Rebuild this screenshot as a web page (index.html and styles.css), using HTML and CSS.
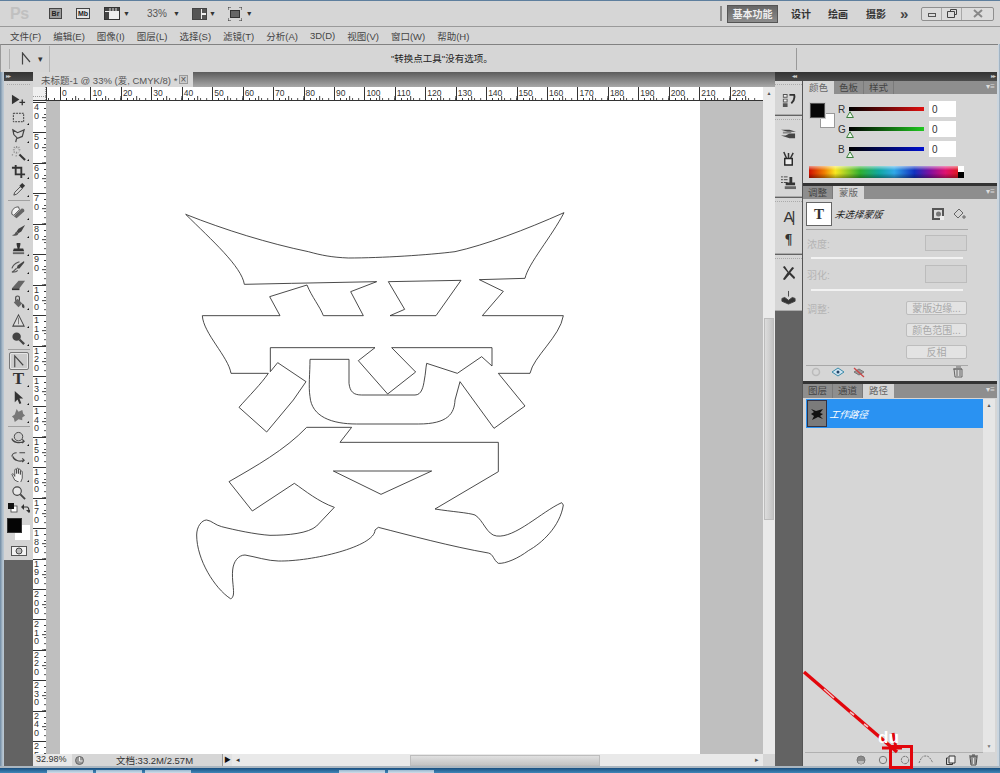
FILE: index.html
```html
<!DOCTYPE html>
<html lang="zh">
<head>
<meta charset="utf-8">
<title>Photoshop</title>
<link rel="stylesheet" href="styles.css">
</head>
<body>
<div class="app">
  <header class="appbar">
    <span class="ps-logo">Ps</span>
    <span class="br-btn">Br</span>
    <span class="mb-btn">Mb</span>
    <svg class="ic viewmode" width="16" height="13" viewBox="0 0 16 13"><rect x=".5" y=".5" width="15" height="12" fill="#eee" stroke="#333"/><path d="M1 1h14v3H1zM1 5h4v7H1z" fill="#444"/><path d="M6 1v3M9 1v3M12 1v3" stroke="#ddd"/></svg>
    <span class="caret c-view">▼</span>
    <span class="pct">33%</span>
    <span class="caret c-pct">▼</span>
    <svg class="ic arrange" width="15" height="12" viewBox="0 0 15 12"><rect x=".5" y=".5" width="14" height="11" fill="#eee" stroke="#444"/><path d="M1 1h8v10H1zM10 1h4v4h-4zM10 7h4v4h-4z" fill="#555"/></svg>
    <span class="caret c-arr">▼</span>
    <svg class="ic screen" width="14" height="14" viewBox="0 0 14 14"><rect x="2.500" y="3.500" width="9" height="7" fill="#666" stroke="#333"/><path d="M0 3V0h3M11 0h3v3M0 11v3h3M14 11v3h-3" fill="none" stroke="#333"/></svg>
    <span class="caret c-scr">▼</span>
    <span class="spacer"></span>
    <span class="grip-v"></span>
    <span class="ws ws-active">基本功能</span>
    <span class="ws ws-design">设计</span>
    <span class="ws ws-paint">绘画</span>
    <span class="ws ws-photo">摄影</span>
    <span class="more">»</span>
    <div class="winbtns">
      <span class="wb wb-min"><i class="min-glyph"></i></span>
      <span class="wb wb-max"><svg width="10" height="9" viewBox="0 0 10 9"><path d="M3.500 2.500v-2h6v5h-2M.5 2.500h7v6h-7z" fill="none" stroke="#444"/></svg></span>
      <span class="wb wb-close"><svg width="10" height="9" viewBox="0 0 10 9"><path d="M1 1l8 7M9 1L1 8" stroke="#888" stroke-width="2"/></svg></span>
    </div>
  </header>

  <nav class="menubar">
    <span>文件(F)</span><span>编辑(E)</span><span>图像(I)</span><span>图层(L)</span><span>选择(S)</span><span>滤镜(T)</span><span>分析(A)</span><span>3D(D)</span><span>视图(V)</span><span>窗口(W)</span><span>帮助(H)</span>
  </nav>

  <div class="options">
    <span class="opt-grip"></span>
    <svg class="opt-tool" width="10" height="13" viewBox="0 0 10 13"><path d="M1.500 12.500V1L9 10" fill="none" stroke="#444" stroke-width="1.200"/></svg>
    <span class="opt-caret">▾</span>
    <span class="opt-sep"></span>
    <span class="opt-text">"转换点工具"没有选项。</span>
    <span class="opt-sep2"></span>
  </div>

  <main class="work">
    <aside class="toolbar">
      <div class="tool-head"><span class="dbl">▸▸</span></div>
      <div class="tools">
        <div class="tool-grip"></div>
        <div class="tool"><svg viewBox="0 0 16 16"><path d="M1 3l8 5-8 5z" fill="#333"/><path d="M12 8v6M9 11h6" stroke="#333" stroke-width="1.400"/></svg></div>
        <div class="tool fly"><svg viewBox="0 0 16 16"><rect x="2.500" y="3.500" width="11" height="9" fill="none" stroke="#333" stroke-dasharray="2 1"/></svg></div>
        <div class="tool fly"><svg viewBox="0 0 16 16"><path d="M2 2l5 3 7-3-2 7-5 2-4-4zM6 11l-1 4" fill="none" stroke="#444" stroke-width="1.300"/></svg></div>
        <div class="tool fly"><svg viewBox="0 0 16 16"><path d="M9 9l6 6" stroke="#333" stroke-width="2.200"/><path d="M2 4h2M8 4h2M6 0v2M6 6v2M3 1l1 1M9 1L8 2M3 7l1-1M1 10l1-1M5 11l1-1" stroke="#8a8a8a" stroke-width="1.200"/><circle cx="6" cy="5" r="3" fill="none" stroke="#aaa" stroke-dasharray="1 1"/></svg></div>
        <div class="tool fly"><svg viewBox="0 0 16 16"><path d="M5 1v10h10M1 4h10v11" fill="none" stroke="#333" stroke-width="2"/></svg></div>
        <div class="tool fly"><svg viewBox="0 0 16 16"><path d="M3 14l1-3 6-6 2 2-6 6z" fill="#ddd" stroke="#444"/><path d="M9 4l3-3 3 3-3 3z" fill="#333"/></svg></div>
        <div class="tool-sep"></div>
        <div class="tool fly"><svg viewBox="0 0 16 16"><path d="M3 12L11 4c2-1 4 1 3 3l-8 7z" fill="#666"/><path d="M1 10C0 6 3 2 8 2l1 3-6 6z" fill="#f2f2f2" stroke="#444" stroke-width=".9"/></svg></div>
        <div class="tool fly"><svg viewBox="0 0 16 16"><path d="M15 2L8 6l-2 3 2 2 3-2z" fill="#444"/><path d="M6 9c-2 1-1 3-5 4 3 1 6 1 7-2z" fill="#555"/></svg></div>
        <div class="tool fly"><svg viewBox="0 0 16 16"><path d="M6 2h4v2L9 8h4l1 3H2l1-3h4L6 4z" fill="#333"/><path d="M2 12h12v2H2z" fill="#666"/></svg></div>
        <div class="tool fly"><svg viewBox="0 0 16 16"><path d="M14 2L7 7l-1 3 3 0 5-6z" fill="#444"/><path d="M1 10c2-6 6-6 8-7M6 10c-2 1-2 3-5 4 3 0 5 0 6-2" fill="none" stroke="#555" stroke-width="1.200"/></svg></div>
        <div class="tool fly"><svg viewBox="0 0 16 16"><path d="M1 12l7-8h7l-6 8z" fill="#666"/><path d="M1 12h8v2H1z" fill="#333"/></svg></div>
        <div class="tool fly"><svg viewBox="0 0 16 16"><path d="M3 8l4-4 5 5-4 4z" fill="#666"/><path d="M5 6V3a2 2 0 014 0v3" fill="none" stroke="#444" stroke-width="1.200"/><path d="M12 9c2 1 3 3 2 5-2 0-3-2-2-5z" fill="#444"/></svg></div>
        <div class="tool fly"><svg viewBox="0 0 16 16"><path d="M8 2l6 12H2z" fill="#ddd" stroke="#444" stroke-width="1.100"/><path d="M8 5v7" stroke="#777"/></svg></div>
        <div class="tool fly"><svg viewBox="0 0 16 16"><circle cx="6" cy="6" r="4.500" fill="#444"/><path d="M9 9l5 5" stroke="#444" stroke-width="2.400"/></svg></div>
        <div class="tool-sep"></div>
        <div class="tool tool-active"><svg viewBox="0 0 16 16"><path d="M4 14V2l9 10" fill="none" stroke="#444" stroke-width="1.200"/></svg></div>
        <div class="tool fly"><span class="t-glyph">T</span></div>
        <div class="tool fly"><svg viewBox="0 0 16 16"><path d="M4 1v12l3-3 2 5 2-1-2-5h4z" fill="#333"/></svg></div>
        <div class="tool fly"><svg viewBox="0 0 16 16"><path d="M6 1l2 3 4-2 1 4 2 2-3 2 0 3-4-1-4 3-1-4-2-2 3-2z" fill="#777"/></svg></div>
        <div class="tool-sep"></div>
        <div class="tool fly"><svg viewBox="0 0 16 16"><circle cx="8" cy="6" r="4.500" fill="#ccc" stroke="#444"/><path d="M1 8c1 4 8 6 13 3M12 9l2 2-2 2" fill="none" stroke="#444" stroke-width="1.300"/></svg></div>
        <div class="tool fly"><svg viewBox="0 0 16 16"><path d="M9 4h6M1 8c0-2 2-4 5-4M2 8c1 4 7 6 12 4M12 10l2 2-2 2" fill="none" stroke="#444" stroke-width="1.300"/></svg></div>
        <div class="tool fly"><svg viewBox="0 0 16 16"><path d="M4 14L1 8c0-1 1-1 2 0l1 2V3c0-1 2-1 2 0v4-5c0-1 2-1 2 0v5-4c0-1 2-1 2 0v5-3c0-1 2-1 2 0v7l-2 5z" fill="#eee" stroke="#444" stroke-width=".9"/></svg></div>
        <div class="tool"><svg viewBox="0 0 16 16"><circle cx="6.500" cy="6.500" r="4.500" fill="#e8e8e8" stroke="#444" stroke-width="1.200"/><path d="M10 10l5 5" stroke="#444" stroke-width="2"/></svg></div>
        <div class="mini-colors">
          <svg width="10" height="10" viewBox="0 0 10 10"><rect x="3" y="3" width="6" height="6" fill="#fff" stroke="#444" stroke-width=".8"/><rect width="6" height="6" fill="#111"/></svg>
          <svg width="9" height="9" viewBox="0 0 9 9"><path d="M1 3h5q2 0 2 5" fill="none" stroke="#333" stroke-width="1.200"/><path d="M3 0v6L0 3zM5 6h6L8 9z" fill="#333"/></svg>
        </div>
        <div class="swatch-pair"><span class="sw-bg"></span><span class="sw-fg"></span></div>
        <div class="qmask"><svg width="16" height="10" viewBox="0 0 16 10"><rect x=".5" y=".5" width="15" height="9" fill="#f2f2f2" stroke="#555"/><circle cx="8" cy="5" r="3" fill="#bbb" stroke="#444"/></svg></div>
      </div>
    </aside>

    <section class="docarea">
      <div class="tabbar">
        <div class="doctab"><span>未标题-1 @ 33% (爱, CMYK/8) *</span><span class="tabclose">×</span></div>
      </div>
      <div class="docgrid">
        <div class="hruler">
          <div class="corner"></div>
          <div class="hlead"></div>
          <span class="ht">0</span><span class="ht">10</span><span class="ht">20</span><span class="ht">30</span><span class="ht">40</span><span class="ht">50</span><span class="ht">60</span><span class="ht">70</span><span class="ht">80</span><span class="ht">90</span><span class="ht">100</span><span class="ht">110</span><span class="ht">120</span><span class="ht">130</span><span class="ht">140</span><span class="ht">150</span><span class="ht">160</span><span class="ht">170</span><span class="ht">180</span><span class="ht">190</span><span class="ht">200</span><span class="ht">210</span><span class="ht">220</span>
        </div>
        <div class="vscroll">
          <span class="sc-up">▲</span>
          <span class="sc-thumb"></span>
          <span class="sc-down"></span>
        </div>
        <div class="stage">
          <div class="vruler">
            <span class="vt"><b>40</b></span><span class="vt"><b>50</b></span><span class="vt"><b>60</b></span><span class="vt"><b>70</b></span><span class="vt"><b>80</b></span><span class="vt"><b>90</b></span><span class="vt"><b>100</b></span><span class="vt"><b>110</b></span><span class="vt"><b>120</b></span><span class="vt"><b>130</b></span><span class="vt"><b>140</b></span><span class="vt"><b>150</b></span><span class="vt"><b>160</b></span><span class="vt"><b>170</b></span><span class="vt"><b>180</b></span><span class="vt"><b>190</b></span><span class="vt"><b>200</b></span><span class="vt"><b>210</b></span><span class="vt"><b>220</b></span><span class="vt"><b>230</b></span><span class="vt"><b>240</b></span><span class="vt"><b>250</b></span>
          </div>
          <div class="paste-l"></div>
          <div class="canvas">
            <svg class="glyph" width="640" height="653" viewBox="-345 -297 1920 1959">
              <path d="M32 43C150 90 280 130 400 155C440 166 470 172 520 174C620 174 760 165 840 155C930 135 1050 90 1167 38C1130 110 1060 190 1050 235L913 239L985 274L922 347L1165 347C1155 410 1075 470 1065 520L970 520L1050 618L957 685L895 600L855 545L840 600C838 640 820 672 730 672L545 672C470 672 410 650 405 590C400 560 405 520 405 478L522 478L522 550C525 575 535 585 560 585L720 585C740 585 745 560 748 540C752 520 752 505 755 490L847 520L920 470L951 498L951 443L650 443L722 516L638 582L550 482L600 443L286 443L286 515L308 488L393 545L355 600L275 696L192 622C220 590 260 550 280 520L168 520C160 470 85 400 82 347L315 347L284 290L396 255C410 290 435 320 445 347L565 347L527 275L605 245L350 250L208 253C200 200 110 120 32 43Z"/>
              <path d="M640 245L858 241L783 347L645 347L689 328Z"/>
              <path d="M395 682L530 682L495 727L970 727L970 815L780 927C830 935 880 938 900 945C925 960 935 1005 965 1008C1020 1015 1100 935 1160 908L1165 915C1155 980 1100 1030 1060 1052C1030 1075 990 1092 970 1090C955 1080 955 1062 940 1059C830 1040 700 1005 610 982L600 990C600 1040 410 1085 310 1083C280 1083 240 1070 210 1065C190 1065 175 1085 173 1110C170 1140 178 1170 175 1185C172 1195 168 1198 165 1195C120 1165 65 1080 65 1005C65 980 80 960 95 960C110 962 120 975 140 980C180 990 240 1003 285 1006C340 1006 400 1000 425 978L478 922C430 905 390 872 358 850L232 933L162 845C240 800 330 750 395 682Z"/>
              <path d="M475 813L770 813L618 883Z"/>
            </svg>
          </div>
          <div class="paste-r"></div>
        </div>
      </div>
      <div class="statusbar">
        <span class="st-zoom">32.98%</span>
        <span class="st-icon"><svg width="11" height="11" viewBox="0 0 11 11"><circle cx="5.500" cy="5.500" r="4" fill="#999" stroke="#666"/><path d="M5.500 2v4h3" fill="none" stroke="#eee"/></svg></span>
        <span class="st-doc">文档:33.2M/2.57M</span>
        <span class="st-arrow">▶</span>
        <span class="hscroll"><i class="hs-l">◂</i><i class="hs-thumb"></i><i class="hs-r">▸</i></span>
        <span class="st-end"></span>
      </div>
    </section>

    <div class="rightcol">
      <div class="dockhead"><span class="dbl">◂◂</span><span class="dbl">▸▸</span></div>
      <div class="dockbody">
        <div class="dock">
          <div class="dgroup g1"><svg viewBox="0 0 16 16"><path d="M2 1h5v4H2zM2 6h5v4H2zM2 11h5v4H2z" fill="#555"/><path d="M3 2h3v2H3zM3 7h3v2H3z" fill="#eee"/><path d="M9 2h5c1 3 0 6-3 9" fill="none" stroke="#333" stroke-width="2"/></svg></div>
          <div class="dgroup g2">
            <svg viewBox="0 0 16 16"><path d="M0 3h9l7 2H7zM0 9h5l4-2h6v5H9z" fill="#444"/><path d="M2 6h9" stroke="#888" stroke-width="2"/></svg>
            <svg viewBox="0 0 16 16"><path d="M4 8h8v7H4z" fill="#eee" stroke="#222" stroke-width="1.500"/><path d="M6 8L3 1M8 8V2M10 8l3-6" stroke="#333" stroke-width="1.600"/></svg>
            <svg viewBox="0 0 16 16"><path d="M0 2h2M0 5h2M0 8h2M3 2h4M3 5h4M3 8h4" stroke="#444"/><path d="M9 2h3v6h3v3H5V8h4z" fill="#333"/><path d="M4 12h12v3H4z" fill="#666"/></svg>
          </div>
          <div class="dgroup g3">
            <span class="d-a">A|</span>
            <span class="d-p">¶</span>
          </div>
          <div class="dgroup g4">
            <svg viewBox="0 0 16 16"><path d="M2 1l5 6-5 7 2 1 5-6 5 5 1-2-5-5 4-5-2-1-4 5-4-6z" fill="#333"/></svg>
            <svg viewBox="0 0 16 16"><path d="M8 1v6M1 9l3-1 4 3 4-3 3 1v3l-7 3-7-3z" fill="#333" stroke="#444"/></svg>
          </div>
          <div class="dfill"></div>
        </div>

        <div class="panels">
          <section class="panel color-panel">
            <div class="ptabs"><span class="ptab on">颜色</span><span class="ptab">色板</span><span class="ptab">样式</span><span class="pmenu">▾≡</span></div>
            <div class="color-body">
              <div class="color-top">
                <div class="fgbg"><span class="bg"></span><span class="fg"></span></div>
                <div class="rgb">
                  <div class="rgb-row"><label>R</label><span class="track t-r"><svg class="thumb" width="8" height="7" viewBox="0 0 8 7"><path d="M4 .7L7.400 6.500H.6z" fill="#e8f5e8" stroke="#3d7f3d"/></svg></span><input class="rgb-in" value="0" readonly></div>
                  <div class="rgb-row"><label>G</label><span class="track t-g"><svg class="thumb" width="8" height="7" viewBox="0 0 8 7"><path d="M4 .7L7.400 6.500H.6z" fill="#e8f5e8" stroke="#3d7f3d"/></svg></span><input class="rgb-in" value="0" readonly></div>
                  <div class="rgb-row"><label>B</label><span class="track t-b"><svg class="thumb" width="8" height="7" viewBox="0 0 8 7"><path d="M4 .7L7.400 6.500H.6z" fill="#e8f5e8" stroke="#3d7f3d"/></svg></span><input class="rgb-in" value="0" readonly></div>
                </div>
              </div>
              <div class="spectrum"><span class="spec-bw"></span></div>
            </div>
          </section>

          <section class="panel mask-panel">
            <div class="ptabs"><span class="ptab">调整</span><span class="ptab on">蒙版</span><span class="pmenu">▾≡</span></div>
            <div class="mask-body">
              <div class="mask-head">
                <span class="mask-thumb">T</span>
                <span class="mask-title">未选择蒙版</span>
                <svg class="mi1" width="12" height="12" viewBox="0 0 12 12"><rect width="12" height="12" fill="#555"/><rect x="2" y="2" width="8" height="8" fill="#ddd"/><circle cx="6.500" cy="6" r="2.500" fill="#777"/><path d="M8 8h4v4H8z" fill="#eee"/></svg>
                <svg class="mi2" width="13" height="13" viewBox="0 0 13 13"><path d="M6 1l4 4-5 5-4-4zM9 9h4M11 7v4" fill="none" stroke="#666"/></svg>
              </div>
              <div class="rule"></div>
              <div class="mask-row r1"><span>浓度:</span><i class="mask-in"></i></div>
              <div class="mask-slide"></div>
              <div class="mask-row r2"><span>羽化:</span><i class="mask-in"></i></div>
              <div class="mask-slide"></div>
              <div class="mask-adj">
                <span class="adj-label">调整:</span>
                <div class="adj-btns"><span>蒙版边缘...</span><span>颜色范围...</span><span>反相</span></div>
              </div>
              <div class="rule r-foot"></div>
              <div class="mask-foot">
                <svg width="10" height="10" viewBox="0 0 10 10"><circle cx="5" cy="5" r="3.500" fill="none" stroke="#bbb" stroke-width="1.500"/></svg>
                <svg class="eye1" width="14" height="10" viewBox="0 0 14 10"><path d="M1 5l6-4 6 4-6 4z" fill="#cfe4f2" stroke="#3a8aa8"/><circle cx="7" cy="5" r="1.500" fill="#246"/></svg>
                <svg class="eye2" width="12" height="11" viewBox="0 0 12 11"><path d="M1 5l5-3 5 3-5 3z" fill="#999" stroke="#777"/><path d="M1 1l10 9" stroke="#c44" stroke-width="1.300"/></svg>
                <svg class="trash" width="11" height="12" viewBox="0 0 11 12"><path d="M2 3h8v8H3zM4 1h5M1 3h9" fill="none" stroke="#666"/><path d="M5 4v6M8 4v6" stroke="#666"/></svg>
              </div>
            </div>
          </section>

          <section class="panel path-panel">
            <div class="ptabs tall"><span class="ptab">图层</span><span class="ptab">通道</span><span class="ptab on">路径</span><span class="pmenu">▾≡</span></div>
            <div class="path-body">
              <div class="path-list">
                <div class="path-row">
                  <span class="path-thumb"><svg width="14" height="14" viewBox="0 0 14 14"><path d="M1 2l5 2 7-2-3 4 3 1-3 2 3 3-5-2-6 3 2-4-3-2 3-2z" fill="#111"/></svg></span>
                  <span class="path-name">工作路径</span>
                </div>
              </div>
              <div class="path-scroll"><span class="sc-up">▲</span><span class="sc-down dn">▼</span></div>
            </div>
            <div class="path-foot">
              <svg width="10" height="10" viewBox="0 0 10 10"><circle cx="5" cy="5" r="4" fill="#8a8a8a" stroke="#777"/><path d="M2 6a3 3 0 006 0" fill="#bbb"/></svg>
              <svg width="10" height="10" viewBox="0 0 10 10"><circle cx="5" cy="5" r="3.700" fill="none" stroke="#777"/></svg>
              <svg width="10" height="10" viewBox="0 0 10 10"><circle cx="5" cy="5" r="3.700" fill="none" stroke="#777" stroke-dasharray="3 .6"/></svg>
              <svg class="f-curve" width="16" height="9" viewBox="0 0 16 9"><path d="M1 8C4 1 5 1 8 1c3 0 4 2 7 7" fill="none" stroke="#777" stroke-dasharray="2 1"/></svg>
              <svg width="10" height="10" viewBox="0 0 10 10"><path d="M2 3H.5v6.500h6V8" fill="none" stroke="#333"/><path d="M3 1h6v7H3z" fill="#eee" stroke="#333"/></svg>
              <svg width="11" height="12" viewBox="0 0 11 12"><path d="M2 3h7l-1 8H3zM1 2h9M4 1h3" fill="#ddd" stroke="#444"/><path d="M4 4v6M7 4v6" stroke="#444"/></svg>
            </div>
          </section>
        </div>
      </div>
    </div>
  </main>

  <footer class="taskbar"><span class="tb-btn b1"></span><span class="tb-btn"></span><span class="tb-btn"></span><span class="tb-btn b4"></span><span class="tb-btn"></span></footer>

  <svg class="annot" width="1000" height="773" viewBox="0 0 1000 773">
    <path d="M804 672L897 752" stroke="#e2060c" stroke-width="3.400"/>
    <path d="M824 689l10 9M850 712l4 3M864 724l4 3" stroke="#f2c4c4" stroke-width="1.600"/>
    <path d="M893 733l3 15" stroke="#e2060c" stroke-width="3"/>
    <path d="M882 748h20" stroke="#e2060c" stroke-width="3"/>
    <rect x="890.500" y="746.500" width="21" height="21" fill="none" stroke="#e2060c" stroke-width="3"/>
  </svg>
  <span class="wm">du</span>
</div>
</body>
</html>
```
FILE: styles.css
```css
* { box-sizing: border-box; }
html, body { margin: 0; padding: 0; }
body {
  width: 1000px; height: 773px; overflow: hidden;
  font-family: "Liberation Sans", "Noto Sans CJK SC", sans-serif;
  font-size: 10px; color: #333; background: #8ea3b6;
}
svg { display: block; flex: none; }
i { font-style: normal; }
.app {
  position: relative; width: 1000px; height: 773px;
  display: flex; flex-direction: column;
  padding: 1px 3px 0 4px;
  background: linear-gradient(90deg, #6f8aa3 0, #b8c6d2 3px, #b8c6d2 997px, #dfe6ec 998px, #8ea3b6 1000px);
}

/* app bar */
.appbar {
  margin: 0 -3px 0 -4px; padding-left: 10px;
  height: 26px; flex: none; display: flex; align-items: center;
  background: #d6d6d6; border-bottom: 1px solid #9a9a9a; box-shadow: 0 -1px 0 #5e7f9e;
}
.ps-logo { width: 18px; font: bold 16px "Liberation Sans", sans-serif; color: #c0c0c0; letter-spacing: -.5px; }
.br-btn { margin-left: 21px; width: 13px; height: 11px; background: #9c9c9c; border: 1px solid #444; font: bold 7px/9px "Liberation Sans", sans-serif; text-align: center; color: #222; }
.mb-btn { margin-left: 14px; width: 14px; height: 11px; background: #e4e4e4; border: 1px solid #444; font: bold 7px/9px "Liberation Sans", sans-serif; text-align: center; color: #222; }
.viewmode { margin-left: 14px; }
.caret { font-size: 7px; color: #333; }
.c-view { margin-left: 3px; }
.pct { margin-left: 17px; font-size: 10px; color: #555; }
.c-pct { margin-left: 6px; }
.arrange { margin-left: 12px; }
.c-arr { margin-left: 2px; }
.screen { margin-left: 12px; }
.c-scr { margin-left: 4px; }
.spacer { flex: 1; }
.grip-v { width: 2px; height: 15px; background: #8d8d8d; }
.ws { font: bold 10px "Noto Sans CJK SC", sans-serif; color: #333; width: 20px; white-space: nowrap; }
.ws-active {
  margin-left: 5px; width: 51px; height: 18px; line-height: 16px; text-align: center; color: #eee;
  background: linear-gradient(#666, #8c8c8c); border: 1px solid #555;
}
.ws-design { margin-left: 13px; }
.ws-paint { margin-left: 17px; }
.ws-photo { margin-left: 18px; }
.more { margin-left: 14px; width: 12px; font: bold 15px/14px "Liberation Sans", sans-serif; color: #444; }
.winbtns { margin-left: 9px; margin-right: 6px; width: 73px; height: 14px; display: flex; border: 1px solid #8f8f8f; border-radius: 2px; background: #dcdcdc; }
.wb { display: flex; align-items: center; justify-content: center; border-right: 1px solid #a8a8a8; width: 20px; }
.wb-close { flex: 1; border: 0; }
.min-glyph { width: 8px; height: 4px; border: 1px solid #555; margin-top: 3px; }

/* menu */
.menubar {
  margin: 0 -3px 0 -4px; padding-left: 10px;
  flex: none; height: 17px; display: flex; gap: 12px; align-items: center;
  background: #d6d6d6; font-size: 9.500px; color: #444;
}

/* options */
.options {
  margin: 0 -1px 0 -4px; padding-left: 8px;
  flex: none; height: 28px; display: flex; align-items: center;
  background: #d6d6d6; border-top: 1px solid #828282; border-left: 1px solid #999;
}
.opt-grip { width: 1px; height: 20px; background: #b0b0b0; }
.opt-tool { margin-left: 11px; }
.opt-caret { margin-left: 7px; font-size: 9px; color: #333; }
.opt-sep { margin-left: 6px; width: 1px; height: 26px; background: #b4b4b4; }
.opt-text { margin-left: 341px; margin-top: -2px; font-size: 9.500px; color: #222; width: 100px; white-space: nowrap; }
.opt-sep2 { margin-left: 305px; width: 1px; height: 22px; background: #999; }

/* work */
.work { flex: 1; min-height: 0; display: flex; }

/* toolbar */
.toolbar { flex: none; width: 29px; display: flex; flex-direction: column; background: #636363; }
.tool-head { height: 9px; background: linear-gradient(#333, #4a4a4a); color: #ccc; font-size: 6px; line-height: 9px; padding-left: 2px; }
.dbl { font-size: 6px; letter-spacing: -1px; color: #ccc; }
.tools { height: 479px; background: #d4d4d4; display: flex; flex-direction: column; align-items: center; }
.tool-grip { height: 9px; width: 24px; background: linear-gradient(90deg, #aaa 50%, transparent 50%) 0 3px / 2px 1px repeat-x; }
.tool { position: relative; width: 20px; height: 18px; flex: none; display: flex; align-items: center; justify-content: center; }
.tool svg { width: 15px; height: 15px; }
.fly::after { content: ""; position: absolute; right: 0; bottom: 1px; border: 1.500px solid transparent; border-right-color: #111; border-bottom-color: #111; }
.tool-sep { height: 1px; width: 22px; margin: 2px 0; background: #a0a0a0; flex: none; }
.tool-active { border: 1px solid #777; border-radius: 2px; background: #cbcbcb; box-shadow: inset 0 0 0 1px #e6e6e6; }
.t-glyph { font: bold 17px/16px "Liberation Serif", serif; color: #333; }
.mini-colors { margin-top: 2px; width: 22px; height: 10px; display: flex; justify-content: space-between; align-items: center; }
.swatch-pair { position: relative; margin-top: 5px; width: 23px; height: 23px; flex: none; }
.sw-fg { position: absolute; left: 0; top: 0; width: 15px; height: 15px; background: #050505; border: 1px solid #333; }
.sw-bg { position: absolute; left: 8px; top: 7px; width: 15px; height: 15px; background: #fff; }
.qmask { margin-top: 5px; }

/* document */
.docarea { flex: none; width: 742px; display: flex; flex-direction: column; }
.tabbar { flex: none; height: 15px; background: linear-gradient(#5c5c5c, #a8a8a8); }
.doctab {
  width: 160px; height: 15px; background: #d8d8d8; padding-left: 8px;
  display: flex; align-items: center; justify-content: space-between; padding-right: 5px; color: #555; font-size: 9.500px; white-space: nowrap;
}
.tabclose { width: 9px; height: 9px; line-height: 7px; text-align: center; border: 1px solid #999; color: #555; font-size: 10px; background: #ccc; }
.docgrid { flex: none; display: grid; grid-template-columns: 730px 12px; grid-template-rows: 14px 653px; }
.hruler {
  grid-column: 1; grid-row: 1; display: flex; overflow: hidden; background-color: #fff; border-bottom: 1px solid #333;
}
.corner {
  flex: none; width: 13px; background: #efefef;
  background-image: linear-gradient(90deg, #9a9a9a 50%, transparent 50%); background-size: 2px 1px; background-repeat: repeat-x; background-position: 0 9px;
  border-right: 1px dotted #999;
}
.hlead {
  flex: none; width: 14px; border-left: 1px solid #333;
  background: linear-gradient(90deg, #333 1px, transparent 1px) 1px 100% / 6.090px 2px repeat-x;
}
.ht {
  flex: 0 0 30.450px; padding: 2px 0 0 2px; font-size: 8.500px; line-height: 9px; color: #333;
  background-image: linear-gradient(90deg, #333 1px, transparent 1px), linear-gradient(90deg, #333 1px, transparent 1px), linear-gradient(90deg, #333 1px, transparent 1px);
  background-size: 1px 100%, 15.225px 4px, 6.090px 2px;
  background-position: 0 0, 0 100%, 0 100%;
  background-repeat: no-repeat, repeat-x, repeat-x;
}
.vscroll {
  grid-column: 2; grid-row: 1 / 3; background: #eaeaea; display: flex; flex-direction: column; align-items: center; position: relative;
}
.sc-up { height: 12px; font-size: 5px; line-height: 12px; color: #555; }
.vscroll .sc-thumb {
  margin-top: 219px; width: 10px; height: 202px; border: 1px solid #bdbdbd;
  background: linear-gradient(90deg, #dcdcdc, #c4c4c4);
}
.stage { grid-column: 1; grid-row: 2; display: flex; height: 653px; overflow: hidden; background: #bfbfbf; }
.vruler { flex: none; width: 13px; height: 653px; overflow: hidden; background: #fff; padding-top: 1px; }
.vt {
  display: block; height: 30.450px; padding: 1px 0 0 1px; overflow: hidden;
  background-image: linear-gradient(#333 1px, transparent 1px), linear-gradient(#333 1px, transparent 1px), linear-gradient(#333 1px, transparent 1px);
  background-size: 100% 1px, 4px 15.225px, 2px 6.090px;
  background-position: 0 0, 100% 0, 100% 0;
  background-repeat: no-repeat, repeat-y, repeat-y;
}
.vt b { display: block; width: 6px; font-weight: normal; font-size: 9px; line-height: 8.500px; word-break: break-all; color: #333; }
.paste-l { flex: none; width: 14px; }
.canvas { flex: none; width: 640px; height: 653px; background: #fff; }
.glyph { fill: none; stroke: #2e2e2e; stroke-width: 2.600; }
.paste-r { flex: none; width: 63px; }

/* status */
.statusbar { flex: none; height: 12px; display: flex; align-items: center; background: #d6d6d6; font-size: 9.500px; color: #333; }
.st-zoom { width: 39px; height: 12px; background: #e8e8e8; padding-left: 3px; line-height: 11px; font-size: 9px; }
.st-icon { width: 15px; display: flex; justify-content: center; }
.st-doc { width: 135px; text-align: center; }
.st-arrow { width: 10px; height: 12px; font-size: 7px; line-height: 12px; text-align: center; color: #111; background: #e2e2e2; border-left: 1px solid #999; }
.hscroll { flex: 1; height: 12px; background: #e9e9e9; position: relative; display: flex; align-items: center; }
.hs-l { margin-left: 4px; font-size: 7px; color: #333; }
.hs-thumb {
  position: absolute; left: 178px; width: 190px; height: 11px; border: 1px solid #bdbdbd;
  background: linear-gradient(#e0e0e0, #c4c4c4);
}
.hs-r { position: absolute; right: 4px; font-size: 7px; color: #555; }
.st-end { width: 12px; }

/* right */
.rightcol { flex: none; width: 222px; display: flex; flex-direction: column; background: #636363; }
.dockhead { flex: none; height: 9px; background: linear-gradient(#333, #4c4c4c); display: flex; justify-content: space-between; padding: 0 2px 0 17px; line-height: 8px; }
.dockbody { flex: 1; min-height: 0; display: flex; }
.dock { flex: none; width: 28px; display: flex; flex-direction: column; gap: 1px; border-right: 1px solid #555; background: #636363; }
.dgroup {
  background: #d6d6d6; display: flex; flex-direction: column; align-items: center; padding-top: 11px;
  border-bottom: 1px solid #aaa;
  background-image: linear-gradient(90deg, #aaa 50%, transparent 50%); background-size: 2px 1px; background-repeat: repeat-x; background-position: 2px 3px;
}
.dgroup svg { width: 15px; height: 15px; }
.g1 { height: 34px; }
.g1 svg { margin-top: 1px; }
.g2 { height: 81px; padding-top: 11px; gap: 9px; }
.g3 { height: 56px; }
.g4 { height: 56px; padding-top: 11px; gap: 9px; }
.d-a { font: 15px/16px "Liberation Sans", sans-serif; color: #333; letter-spacing: -2px; }
.d-p { margin-top: 7px; font: bold 14px/16px "Liberation Serif", serif; color: #333; }
.dfill { flex: 1; }

.panels { flex: 1; min-width: 0; display: flex; flex-direction: column; gap: 3px; background: #333; }
.panel { background: #d6d6d6; display: flex; flex-direction: column; }
.ptabs { flex: none; height: 13px; display: flex; background: #8e8e8e; position: relative; }
.ptabs.tall { height: 14px; }
.ptab { padding: 0 5px; font-size: 9.500px; line-height: 13px; color: #444; border-right: 1px solid #7a7a7a; }
.ptab.on { background: #d6d6d6; color: #666; border-right: 0; padding: 0 6px; }
.pmenu { margin-left: auto; margin-right: 2px; color: #ddd; font-size: 8px; line-height: 12px; }

.color-panel { flex: none; height: 102px; }
.color-body { flex: 1; padding: 7px 0 0 6px; }
.color-top { display: flex; }
.fgbg { position: relative; flex: none; width: 29px; height: 27px; margin: 2px 0 0 1px; }
.fg { position: absolute; left: 0; top: 0; width: 15px; height: 15px; background: #060606; border: 1px solid #555; box-shadow: 0 0 0 1px #ccc; }
.bg { position: absolute; left: 10px; top: 10px; width: 15px; height: 15px; background: #fff; border: 1px solid #999; }
.rgb { display: flex; flex-direction: column; gap: 4px; margin-left: -1px; }
.rgb-row { display: grid; grid-template-columns: 11px 75px 32px; align-items: center; height: 16px; }
.rgb-row label { font-size: 10px; color: #333; }
.track { position: relative; display: block; height: 4px; }
.t-r { background: linear-gradient(90deg, #000, #e01010); }
.t-g { background: linear-gradient(90deg, #000, #20c820); }
.t-b { background: linear-gradient(90deg, #000, #0010d0); }
.thumb { position: absolute; left: -3px; top: 4px; }
.rgb-in { width: 27px; height: 16px; margin-left: 5px; padding: 0 0 0 3px; border: 0; background: #fff; font: 10px "Liberation Sans", sans-serif; color: #333; outline: 0; }
.spectrum {
  position: relative; margin-top: 9px; width: 155px; height: 12px;
  background:
    linear-gradient(rgba(255,255,255,.55), rgba(255,255,255,0) 35%, rgba(0,0,0,0) 60%, rgba(0,0,0,.35)),
    linear-gradient(90deg, #d01000 0, #f08000 10%, #f8e820 17%, #30b030 33%, #10a8a0 45%, #30a8e8 55%, #1030c0 68%, #8010a0 78%, #e01070 88%, #e01818 97%);
}
.spec-bw { position: absolute; right: 0; top: 0; width: 6px; height: 12px; background: linear-gradient(#fff 50%, #000 50%); }

.mask-panel { flex: none; height: 195px; }
.mask-body { flex: 1; padding: 3px 0 0 3px; }
.mask-head { position: relative; display: flex; align-items: center; height: 24px; }
.mask-thumb { width: 26px; height: 24px; background: #fff; border: 1px solid #666; font: bold 15px/22px "Liberation Serif", serif; text-align: center; color: #333; }
.mask-title { margin-left: 3px; width: 48px; white-space: nowrap; font-style: italic; font-size: 9.500px; color: #222; transform: skewX(-10deg); }
.mi1 { margin-left: 49px; }
.mi2 { margin-left: 9px; }
.rule { margin-top: 3px; width: 162px; height: 1px; background: #a8a8a8; }
.mask-row { display: flex; align-items: center; justify-content: space-between; width: 161px; padding-left: 1px; color: #b4b4b4; font-size: 10px; }
.r1 { margin-top: 5px; height: 16px; }
.r2 { margin-top: 6px; height: 18px; }
.mask-in { width: 42px; height: 100%; border: 1px solid #bcbcbc; background: #d2d2d2; }
.mask-slide { margin: 6px 0 0 5px; width: 152px; height: 2px; background: #f2f2f2; }
.mask-adj { margin-top: 10px; display: flex; justify-content: space-between; width: 161px; padding-left: 1px; color: #b4b4b4; }
.adj-btns { display: flex; flex-direction: column; gap: 8px; width: 61px; }
.adj-btns span { height: 14px; line-height: 13px; text-align: center; background: #e3e3e3; border: 1px solid #bdbdbd; border-radius: 2px; color: #a8a8a8; font-size: 10px; }
.r-foot { margin-top: 6px; }
.mask-foot { display: flex; align-items: center; margin-top: 0; height: 12px; padding-left: 5px; }
.eye1 { margin-left: 10px; }
.eye2 { margin-left: 8px; }
.trash { margin-left: 87px; }

.path-panel { flex: 1; min-height: 0; }
.path-body { flex: 1; min-height: 0; display: flex; padding-top: 1px; }
.path-list { flex: none; width: 180px; padding-left: 3px; }
.path-row { height: 29px; background: #2a92f2; display: flex; align-items: center; }
.path-thumb { margin-left: 1px; width: 20px; height: 27px; background: #7b7b7b; border: 1px solid #334; display: flex; align-items: center; justify-content: center; }
.path-name { margin-left: 3px; color: #fff; font-style: italic; font-size: 9.500px; transform: skewX(-10deg); }
.path-scroll { flex: none; width: 12px; background: #e6e6e6; display: flex; flex-direction: column; align-items: center; justify-content: space-between; }
.path-scroll .sc-down.dn { height: 12px; font-size: 5px; line-height: 12px; color: #777; }
.path-foot {
  flex: none; height: 14px; margin: 0 14px 0 2px; padding-left: 51px; display: flex; align-items: center; gap: 12px;
  border-top: 1px solid #b0b0b0; background: #d6d6d6;
}
.f-curve { margin-left: -4px; }

/* taskbar */
.taskbar {
  flex: none; height: 7px; margin: 0 -3px 0 -4px; padding: 2px 0 0 47px; display: flex; gap: 3px; align-items: flex-end;
  background: linear-gradient(#1a4f80, #3f86b8);
  border-top: 2px solid #aab6c0;
}
.tb-btn { width: 46px; height: 3px; background: linear-gradient(#9ab8d0, #cfdde8); }
.tb-btn.b4 { margin-left: 145px; }

/* annotation overlay */
.annot { position: absolute; left: 0; top: 0; pointer-events: none; }
.wm { position: absolute; left: 878px; top: 729px; font: bold 17px/18px "Liberation Sans", sans-serif; color: #fff; }
```
